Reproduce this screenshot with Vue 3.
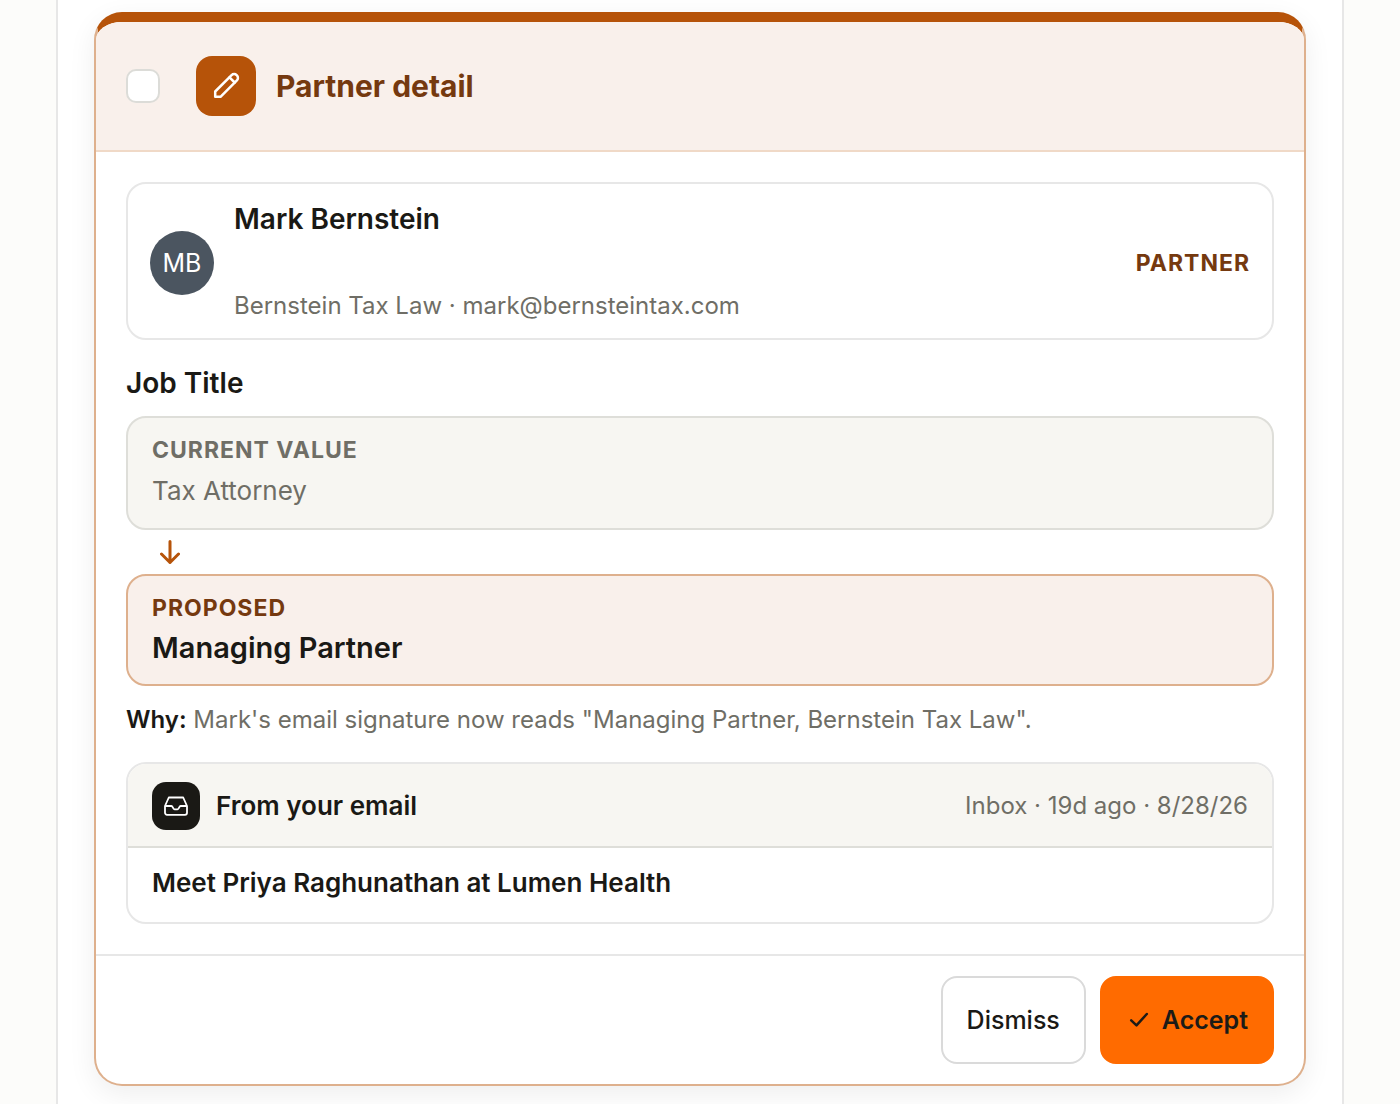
<script setup>
import { ref } from 'vue'

const selected = ref(false)
const partner = {
  initials: 'MB',
  name: 'Mark Bernstein',
  detail: 'Bernstein Tax Law · mark@bernsteintax.com',
  role: 'PARTNER',
}
const change = { field: 'Job Title', current: 'Tax Attorney', proposed: 'Managing Partner' }
</script>

<template>
  <main class="page">
    <section class="panel">
      <article class="card">
        <header class="card-head">
          <input v-model="selected" class="check" type="checkbox" aria-labelledby="card-title" />
          <span class="head-icon">
            <svg width="28" height="28" viewBox="0 0 28 28" fill="none" stroke="#fff" stroke-width="2.500" stroke-linejoin="round" stroke-linecap="round" aria-hidden="true">
              <path d="M3.200 24.800V19.500L19.600 3.100a3.500 3.500 0 0 1 5 0l.3.300a3.500 3.500 0 0 1 0 5L8.500 24.800z" />
              <path d="M17.500 5.300l5.200 5.200" />
            </svg>
          </span>
          <h2 id="card-title" class="title">Partner detail</h2>
        </header>

        <div class="card-body">
          <div class="person">
            <span class="avatar">{{ partner.initials }}</span>
            <div class="person-text">
              <h3 class="name">{{ partner.name }}</h3>
              <p class="detail">{{ partner.detail }}</p>
            </div>
            <span class="role">{{ partner.role }}</span>
          </div>

          <h3 class="field">{{ change.field }}</h3>
          <div class="value">
            <p class="label">CURRENT VALUE</p>
            <p class="text">{{ change.current }}</p>
          </div>
          <div class="arrow">
            <svg width="20" height="24" viewBox="0 0 20 24" fill="none" stroke="#b65309" stroke-width="3" stroke-linecap="round" stroke-linejoin="round" aria-hidden="true">
              <path d="M10 1.500v21M1.500 14l8.500 8.500L18.500 14" />
            </svg>
          </div>
          <div class="value proposed">
            <p class="label">PROPOSED</p>
            <p class="text">{{ change.proposed }}</p>
          </div>
          <p class="why"><strong>Why:</strong> Mark's email signature now reads "Managing Partner, Bernstein Tax Law".</p>

          <section class="source">
            <header class="source-head">
              <span class="source-icon">
                <svg width="24" height="20" viewBox="0 0 24 20" fill="none" stroke="#fff" stroke-width="1.800" stroke-linejoin="round" aria-hidden="true">
                  <path d="M4.800 1.500h14.400L23 10v6.800a2 2 0 0 1-2 2H3a2 2 0 0 1-2-2V10z" />
                  <path d="M1 10h6.500c1.300 0 1.300 3.300 3 3.300h3c1.700 0 1.700-3.300 3-3.300H23" />
                </svg>
              </span>
              <h3 class="source-title">From your email</h3>
              <span class="source-meta">Inbox · 19d ago · 8/28/26</span>
            </header>
            <p class="subject">Meet Priya Raghunathan at Lumen Health</p>
          </section>
        </div>

        <footer class="card-foot">
          <button class="btn" type="button">Dismiss</button>
          <button class="btn accept" type="button">
            <svg width="24" height="16" viewBox="0 0 24 16" fill="none" stroke="#1c1b17" stroke-width="2.500" stroke-linecap="round" stroke-linejoin="round" aria-hidden="true">
              <path d="M5.200 8.300l5.300 5L20.800 2" />
            </svg>
            Accept
          </button>
        </footer>
      </article>
    </section>
  </main>
</template>

<style>
body {
  margin: 0;
  background: #fcfcfa;
}
</style>

<style scoped>
* {
  box-sizing: border-box;
}
h2,
h3,
p {
  margin: 0;
}
.page {
  padding: 0 56px;
  font-family: Inter, "Liberation Sans", sans-serif;
  font-size: 24px;
  line-height: 36px;
  color: #1a1915;
}
.panel {
  padding: 12px 36px 18px;
  background: #fff;
  border: solid #e7e7e7;
  border-width: 0 2px;
}
.card {
  overflow: hidden;
  background: #fff;
  border: 2px solid #deb08d;
  border-top: 10px solid #b65309;
  border-radius: 28px;
  box-shadow: 0 8px 28px rgba(0, 0, 0, 0.07);
}
.card-head {
  display: flex;
  align-items: center;
  padding: 34px 30px;
  background: #f9f0eb;
  border-bottom: 2px solid #f0d9c7;
}
.check {
  appearance: none;
  width: 34px;
  height: 34px;
  margin: 0 36px 0 0;
  background: #fff;
  border: 2px solid #dcdcd8;
  border-radius: 10px;
}
.check:checked {
  background: #b65309;
}
.head-icon {
  display: grid;
  place-items: center;
  width: 60px;
  height: 60px;
  margin-right: 20px;
  background: #b65309;
  border-radius: 16px;
}
.title {
  font-size: 30px;
  font-weight: 700;
  color: #75390f;
}
.card-body {
  padding: 30px;
}
.person {
  display: flex;
  align-items: center;
  gap: 20px;
  padding: 17px 22px 14px;
  border: 2px solid #e7e7e7;
  border-radius: 20px;
}
.avatar {
  display: grid;
  place-items: center;
  width: 64px;
  height: 64px;
  font-size: 25px;
  color: #fff;
  background: #4b5560;
  border-radius: 50%;
}
.person-text {
  display: grid;
  flex: 1;
  gap: 51px;
}
.name,
.field {
  font-size: 28px;
  font-weight: 600;
}
.detail,
.why {
  color: #6f6e66;
}
.role,
.label {
  font-size: 23px;
  font-weight: 700;
  letter-spacing: 1px;
}
.role {
  color: #75390f;
}
.field {
  margin: 25px 0 15px;
}
.value {
  padding: 14px 24px;
  color: #6f6e66;
  background: #f7f6f2;
  border: 2px solid #deded9;
  border-radius: 20px;
}
.text {
  font-size: 26px;
  line-height: 46px;
}
.arrow {
  display: flex;
  padding: 10px 34px;
}
.proposed {
  background: #f9f0eb;
  border-color: #deb08d;
}
.proposed .label {
  color: #75390f;
}
.proposed .text {
  font-size: 29px;
  line-height: 44px;
  font-weight: 600;
  color: #1a1915;
}
.why {
  margin: 16px 0 24px;
}
.why strong {
  font-weight: 600;
  color: #1a1915;
}
.source {
  overflow: hidden;
  border: 2px solid #e7e7e7;
  border-radius: 20px;
}
.source-head {
  display: flex;
  align-items: center;
  gap: 16px;
  padding: 18px 24px 16px;
  background: #f7f6f2;
  border-bottom: 2px solid #deded9;
}
.source-icon {
  display: grid;
  place-items: center;
  width: 48px;
  height: 48px;
  background: #1a1915;
  border-radius: 14px;
}
.source-title {
  flex: 1;
  font-size: 26px;
  font-weight: 600;
}
.source-meta {
  color: #6f6e66;
}
.subject {
  padding: 17px 24px 21px;
  font-size: 26px;
  font-weight: 600;
}
.card-foot {
  display: flex;
  justify-content: flex-end;
  gap: 14px;
  padding: 20px 30px;
  border-top: 2px solid #e7e7e7;
}
.btn {
  display: flex;
  align-items: center;
  gap: 12px;
  height: 88px;
  padding: 0 24px;
  font: inherit;
  font-size: 25px;
  font-weight: 500;
  color: #1a1915;
  background: #fff;
  border: 2px solid #dadada;
  border-radius: 16px;
}
.accept {
  font-weight: 600;
  color: #1c1b17;
  background: #ff6b00;
  border-color: #ff6b00;
}
</style>
